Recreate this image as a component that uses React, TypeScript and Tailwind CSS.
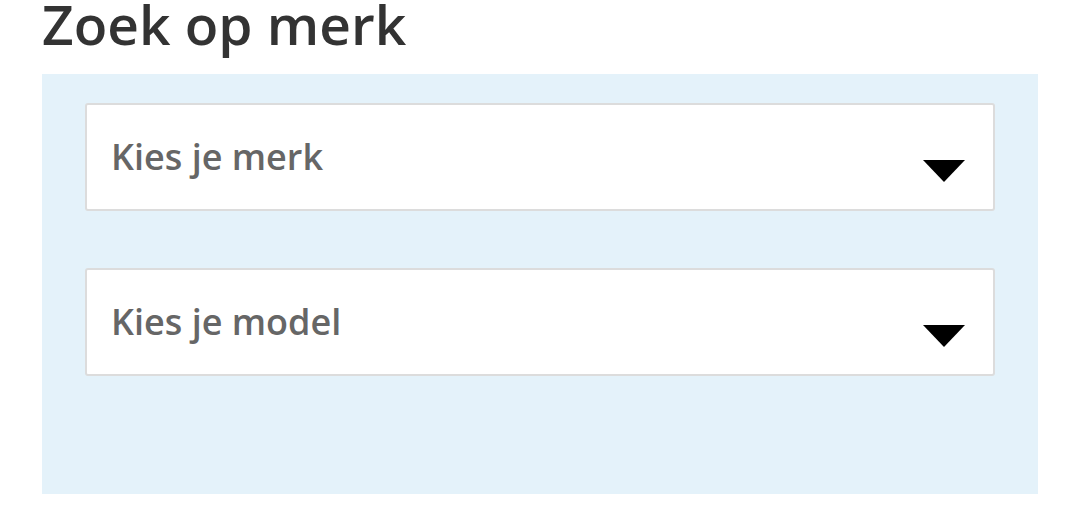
import React from "react";

function Select({ label }: { label: string }) {
  return (
    <div className="relative flex h-[108px] items-center rounded-[3px] border-2 border-[#dcdcdc] bg-white pl-[24px] pr-[28px]">
      <span className="flex-1 text-[36px] font-semibold leading-[54px] text-[#666666]">{label}</span>
      <svg width="42" height="22" viewBox="0 0 42 22" className="mt-[28px]">
        <polygon points="0,0 42,0 21,22" fill="#000" />
      </svg>
    </div>
  );
}

export default function App() {
  return (
    <div className="h-[531px] w-[1080px] overflow-hidden bg-white" style={{ fontFamily: '"Open Sans", sans-serif' }}>
      <div className="px-[42px]">
        <div className="flex h-[74px] flex-col">
          <h1 className="-mt-[4px] text-[55px] font-semibold leading-[56px] text-[#333333]">Zoek op merk</h1>
        </div>
        <div className="flex h-[420px] w-[996px] flex-col gap-[57px] bg-[#e4f2fa] px-[43px] pt-[29px]">
          <Select label="Kies je merk" />
          <Select label="Kies je model" />
        </div>
      </div>
    </div>
  );
}
